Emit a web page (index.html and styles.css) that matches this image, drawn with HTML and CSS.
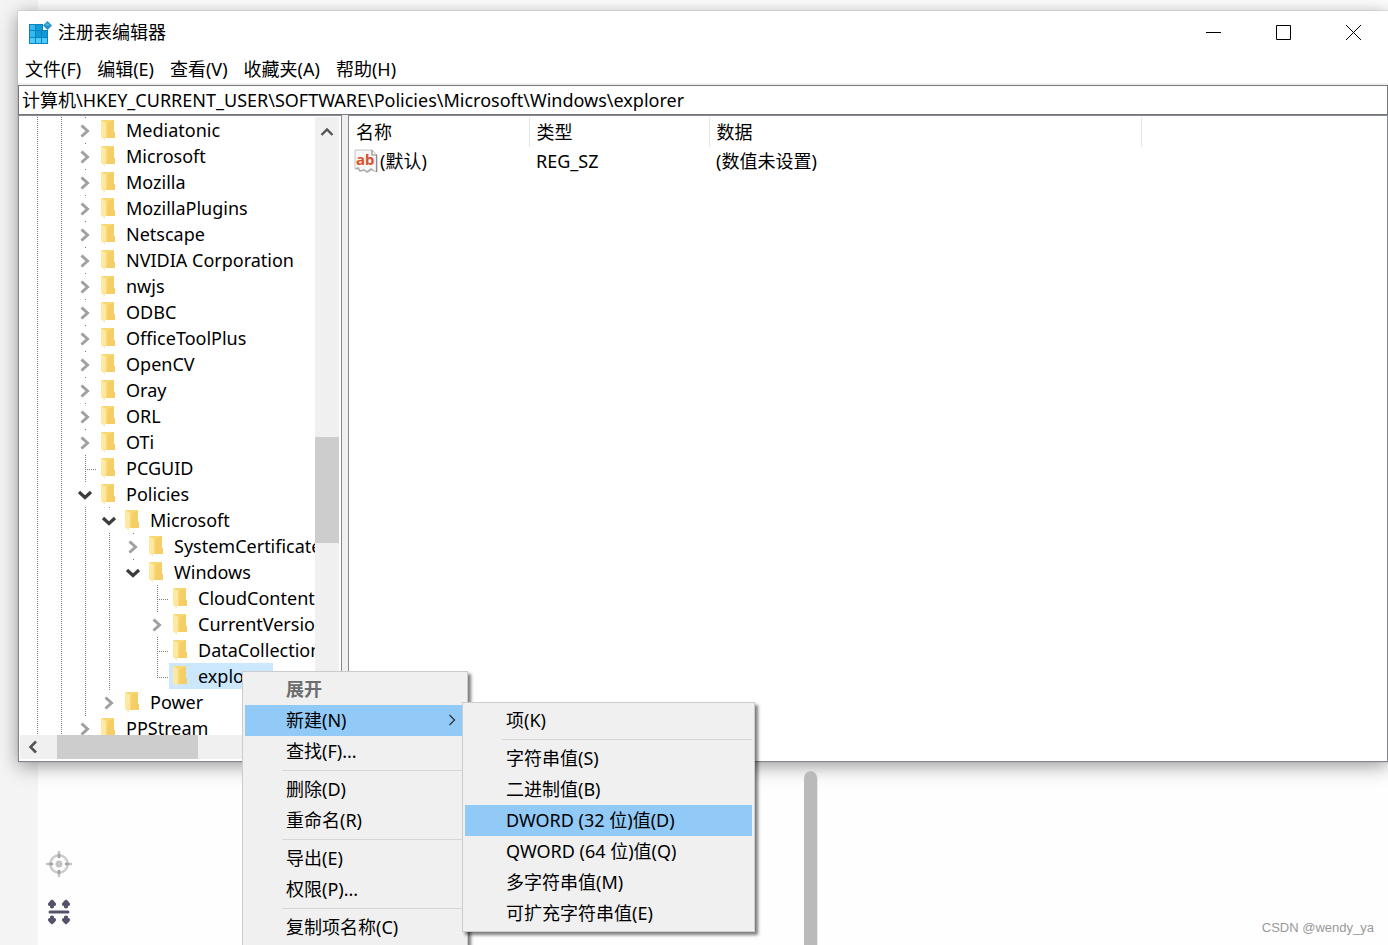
FILE: index.html
```html
<!DOCTYPE html>
<html lang="zh-CN">
<head>
<meta charset="utf-8">
<title>注册表编辑器</title>
<link rel="stylesheet" href="styles.css">
</head>
<body>
<svg class="defs" aria-hidden="true">
  <symbol id="folder" viewBox="0 0 16 22">
    <path d="M1 1h13v12h1v6H4z" fill="#f8d775"/>
    <path d="M8 4l6-3v12h1v6H7z" fill="#f5cf66"/>
    <path d="M1 1l5 3v14l-1 1v2.500L1 18z" fill="#ffe8a2"/>
  </symbol>
  <symbol id="right" viewBox="0 0 12 16"><path d="M2.500 2.500l6 5.500-6 5.500" fill="none" stroke="#a0a0a0" stroke-width="3"/></symbol>
  <symbol id="down" viewBox="0 0 16 12"><path d="M2 3l6 5.500L14 3" fill="none" stroke="#3c3c3c" stroke-width="3.200"/></symbol>
</svg>
<div class="desktop">
  <main class="window">
    <header class="titlebar">
      <svg class="app-icon" viewBox="0 0 24 24">
        <path d="M1 3h14v6h5v14H1z" fill="#0a84bd"/>
        <path d="M2 4h5v5H2zM2 10h5v6H2z" fill="#35b9ee"/>
        <path d="M8 4h6v5H8zM8 10h5v6H8zM14 10h5v6h-5z" fill="#109bd8"/>
        <path d="M2 17h5v5H2zM8 17h5v5H8zM14 17h5v5h-5z" fill="#4ecbfa"/>
        <path d="M19.500 0L24 4.500 19.500 9 15 4.500z" fill="#2592c6"/>
        <path d="M19.500 2L22 4.500h-5z" fill="#55b9e4"/>
      </svg>
      <h1 class="title">注册表编辑器</h1>
      <div class="controls">
        <button class="control" aria-label="最小化"><svg width="15" height="15"><path d="M0 7.500h15" stroke="#000"/></svg></button>
        <button class="control" aria-label="最大化"><svg width="15" height="15"><path d="M.5.5h14v14H.5z" fill="none" stroke="#000"/></svg></button>
        <button class="control" aria-label="关闭"><svg width="15" height="15"><path d="M0 0l15 15M15 0L0 15" stroke="#000"/></svg></button>
      </div>
    </header>
    <nav class="menubar">
      <button>文件(F)</button><button>编辑(E)</button><button>查看(V)</button><button>收藏夹(A)</button><button>帮助(H)</button>
    </nav>
    <input class="address" aria-label="地址" value="计算机\HKEY_CURRENT_USER\SOFTWARE\Policies\Microsoft\Windows\explorer">
    <div class="panes">
      <section class="tree-pane">
        <div class="tree-body">
          <ul class="tree" id="tree"></ul>
          <div class="vbar">
            <button class="vbar-up" aria-label="向上滚动"><svg width="14" height="10"><path d="M1.500 8L7 2.500 12.500 8" fill="none" stroke="#555" stroke-width="2.400"/></svg></button>
            <div class="vbar-thumb"></div>
          </div>
        </div>
        <div class="hbar">
          <button class="hbar-left" aria-label="向左滚动"><svg width="10" height="14"><path d="M8 1.500L2.500 7 8 12.500" fill="none" stroke="#555" stroke-width="2.600"/></svg></button>
          <div class="hbar-thumb"></div>
        </div>
      </section>
      <section class="list-pane">
        <table class="values">
          <colgroup><col class="col"><col class="col"><col class="col-wide"></colgroup>
          <thead><tr><th>名称</th><th>类型</th><th>数据</th></tr></thead>
          <tbody><tr>
            <td class="name"><span class="entry"><svg class="value-icon" viewBox="0 0 24 24">
              <path d="M1 1h17l5 5v17l-3-1-2-2-3 3-3-1-2-1-4 1-2-3-3 1z" fill="#f7f7f7" stroke="#c4c4c4"/>
              <path d="M18 1v5h5M22.500 6v17" fill="none" stroke="#8c8c8c" stroke-width="1.200"/>
              <path d="M2 20l2-1 2 3 4-1 3 2 4-3 3 2" fill="none" stroke="#aaa" stroke-width="1.500"/>
              <text x="2" y="16" class="ab">ab</text>
            </svg>(默认)</span></td>
            <td>REG_SZ</td>
            <td>(数值未设置)</td>
          </tr></tbody>
        </table>
      </section>
    </div>
  </main>
  <footer class="backdrop">
    <div class="tools">
      <button class="tool" aria-label="定位"><svg width="28" height="28" viewBox="0 0 28 28"><circle cx="14" cy="14" r="8.700" fill="none" stroke="#ccc" stroke-width="2.600"/><circle cx="14" cy="14" r="3.500" fill="#c4c4c4"/><path d="M14 2v5M14 21v5M2 14h5M21 14h5" stroke="#c4c4c4" stroke-width="2.600" stroke-linecap="round"/><path d="M14 4v4M14 20v4M4 14h4M20 14h4" stroke="#a4a4a4" stroke-width="2.600"/></svg></button>
      <button class="tool" aria-label="间距"><svg width="28" height="28" viewBox="0 0 28 28" fill="#53546a"><path d="M5 14h18" stroke="#53546a" stroke-width="3" stroke-linecap="round"/><path id="tip" d="M7 1.500Q8.500 2 11 5.500 11.500 8 9 8v1.500Q7 11.500 5 9.500V8Q2.500 8 3 5.500 5.500 2 7 1.500z"/><use href="#tip" x="14"/><path id="tail" d="M7 26.500Q8.500 26 11 22.500 11.500 20 9 20v-1.500Q7 16.500 5 18.500V20Q2.500 20 3 22.500 5.500 26 7 26.500z"/><use href="#tail" x="14"/></svg></button>
    </div>
    <div class="page-scroll"></div>
    <p class="watermark">CSDN @wendy_ya</p>
  </footer>
</div>
<menu class="popup context">
  <li><button class="strong">展开</button></li>
  <li><button class="active">新建(N)<svg class="more" width="8" height="12"><path d="M1.500 1l5 5-5 5" fill="none" stroke="#333" stroke-width="1.300"/></svg></button></li>
  <li><button>查找(F)...</button></li>
  <li class="separator"></li>
  <li><button>删除(D)</button></li>
  <li><button>重命名(R)</button></li>
  <li class="separator"></li>
  <li><button>导出(E)</button></li>
  <li><button>权限(P)...</button></li>
  <li class="separator"></li>
  <li><button>复制项名称(C)</button></li>
</menu>
<menu class="popup submenu">
  <li><button>项(K)</button></li>
  <li class="separator"></li>
  <li><button>字符串值(S)</button></li>
  <li><button>二进制值(B)</button></li>
  <li><button class="active">DWORD (32 位)值(D)</button></li>
  <li><button>QWORD (64 位)值(Q)</button></li>
  <li><button>多字符串值(M)</button></li>
  <li><button>可扩充字符串值(E)</button></li>
</menu>
<script src="tree.js"></script>
</body>
</html>
```
FILE: styles.css
```css
* { box-sizing: border-box; }
body {
  margin: 0;
  height: 100vh;
  overflow: hidden;
  position: relative;
  background: #fefefe;
  color: #000;
  font: 18px/26px "Noto Sans", "Noto Sans CJK SC", sans-serif;
}
button {
  border: 0;
  padding: 0;
  background: none;
  font: inherit;
  color: inherit;
  text-align: left;
}
ul, menu { margin: 0; padding: 0; list-style: none; }
.defs { position: absolute; width: 0; height: 0; }
.desktop {
  display: flex;
  flex-direction: column;
  height: 100vh;
  padding: 11px 0 0 18px;
  background: linear-gradient(90deg, #f4f4f4 38px, #fefefe 38px);
}
.window {
  flex: 1;
  min-height: 0;
  display: flex;
  flex-direction: column;
  background: #fff;
  box-shadow: 0 0 1px #888, 0 4px 18px rgba(0, 0, 0, .4);
}
.titlebar { display: flex; align-items: center; height: 43px; padding-left: 10px; }
.app-icon { width: 24px; height: 24px; }
.title { margin: 0 0 0 6px; padding-bottom: 2px; font-size: 18px; font-weight: 400; }
.controls { display: flex; margin-left: auto; }
.control { display: flex; align-items: center; justify-content: center; width: 70px; height: 43px; }
.menubar { display: flex; gap: 16px; height: 31px; padding: 0 7px; border-bottom: 2px solid #f0f0f0; }
.address {
  height: 30px;
  width: 100%;
  padding: 0 3px 2px;
  border: 1px solid #777;
  background: #fff;
  font: inherit;
  color: inherit;
  outline: 0;
}
.panes { flex: 1; min-height: 0; display: flex; gap: 6px; background: #f0f0f0; }
.tree-pane, .list-pane { background: #fff; border: 1px solid #828790; }
.tree-pane { display: flex; flex-direction: column; width: 324px; padding: 1px; }
.tree-body { flex: 1; min-height: 0; display: flex; }
.tree { flex: 1; min-width: 0; overflow: hidden; padding-left: 5px; }
.row { display: flex; height: 26px; white-space: nowrap; }
.cell { flex: none; width: 24px; display: flex; align-items: center; justify-content: center; }
.line, .tee, .corner { background: repeating-linear-gradient(#808080 0 1px, transparent 1px 2px) 12px 0 / 1px 100% no-repeat; }
.tee, .corner {
  background-image: repeating-linear-gradient(#808080 0 1px, transparent 1px 2px), repeating-linear-gradient(90deg, #808080 0 1px, transparent 1px 2px);
  background-position: 12px 0, 12px 14px;
  background-size: 1px 100%, 11px 1px;
}
.corner { background-size: 1px 14px, 11px 1px; }
.toggle { display: flex; align-items: center; justify-content: center; width: 20px; height: 24px; padding-top: 2px; background: #fff; }
.right { width: 12px; height: 16px; }
.down { width: 16px; height: 12px; }
.label { display: flex; align-items: center; padding: 0 4px 0 3px; gap: 10px; }
.folder { width: 16px; height: 22px; }
.selected { background: #cce8ff; }
.vbar, .hbar { display: flex; background: #f0f0f0; }
.vbar { flex-direction: column; width: 24px; margin-right: 1px; }
.vbar-up { height: 30px; display: flex; align-items: center; justify-content: center; }
.vbar-thumb { height: 106px; margin-top: 290px; background: #cdcdcd; }
.hbar { height: 24px; margin-bottom: 1px; }
.hbar-left { width: 37px; display: flex; align-items: center; padding-left: 8px; }
.hbar-thumb { width: 141px; background: #cdcdcd; }
.list-pane { flex: 1; min-width: 0; padding: 1px 0 0; }
.values { border-collapse: collapse; table-layout: fixed; width: 792px; }
.col { width: 180px; }
.col-wide { width: 432px; }
.values th, .values td { padding: 0 7px; font-weight: 400; text-align: left; }
.values th { height: 30px; border-right: 1px solid #e5e5e5; }
.values td { height: 28px; }
.values .name { padding-left: 5px; }
.entry { display: flex; align-items: center; gap: 2px; }
.value-icon { width: 24px; height: 24px; }
.ab { font: bold 15px "Noto Sans", sans-serif; fill: #d9532c; }
.backdrop { display: flex; height: 183px; }
.tools { display: flex; flex-direction: column; gap: 20px; padding: 88px 0 0 27px; width: 786px; }
.tool { display: block; width: 28px; height: 28px; }
.tool svg { display: block; }
.page-scroll { width: 14px; margin-top: 9px; border-right: 1px solid #e8e8e8; background: #bababa; border-radius: 7px 7px 0 0; }
.watermark { margin: auto 14px 4px auto; font: 13px/26px "Liberation Sans", sans-serif; color: #999; }
.popup {
  position: absolute;
  padding: 2px;
  border: 1px solid #ccc;
  background: #f0f0f0;
  box-shadow: 3px 3px 3px rgba(0, 0, 0, .5);
}
.popup button { display: flex; align-items: center; width: 100%; height: 31px; padding: 0 9px 2px 41px; }
.popup .active { background: #91c9f7; }
.popup .strong { font-weight: 700; color: #6d6d6d; }
.more { margin-left: auto; }
.separator { height: 7px; margin-left: 37px; border-top: 3px solid #f0f0f0; background: linear-gradient(#d7d7d7 1px, transparent 1px); }
.context { left: 242px; top: 671px; width: 226px; padding-bottom: 31px; }
.submenu { left: 462px; top: 702px; width: 293px; }
```
FILE: tree.js
```js
// Each entry: guide cells (| line, + tee, L corner, > collapsed, v expanded, . blank), then the key name.
const keys = [
  ["||>", "Mediatonic"], ["||>", "Microsoft"], ["||>", "Mozilla"], ["||>", "MozillaPlugins"],
  ["||>", "Netscape"], ["||>", "NVIDIA Corporation"], ["||>", "nwjs"], ["||>", "ODBC"],
  ["||>", "OfficeToolPlus"], ["||>", "OpenCV"], ["||>", "Oray"], ["||>", "ORL"], ["||>", "OTi"],
  ["||+", "PCGUID"], ["||v", "Policies"], ["|||v", "Microsoft"], ["||||>", "SystemCertificates"],
  ["||||v", "Windows"], ["||||.+", "CloudContent"], ["||||.>", "CurrentVersion"],
  ["||||.+", "DataCollection"], ["||||.L", "explorer"], ["|||>", "Power"], ["||>", "PPStream"]
];
const kinds = { "|": "line", "+": "tee", "L": "corner", ">": "line", "v": "line", ".": "" };
const icon = (id) => `<svg class="${id}"><use href="#${id}"/></svg>`;
document.getElementById("tree").innerHTML = keys.map(([guides, name]) => {
  const cells = [...guides].map((g) => {
    const toggle = g === ">" ? `<button class="toggle" aria-label="展开 ${name}">${icon("right")}</button>`
      : g === "v" ? `<button class="toggle" aria-label="折叠 ${name}">${icon("down")}</button>` : "";
    return `<span class="cell ${kinds[g]}">${toggle}</span>`;
  }).join("");
  const selected = name === "explorer" ? " selected" : "";
  return `<li class="row">${cells}<button class="label${selected}">${icon("folder")}${name}</button></li>`;
}).join("");
```
